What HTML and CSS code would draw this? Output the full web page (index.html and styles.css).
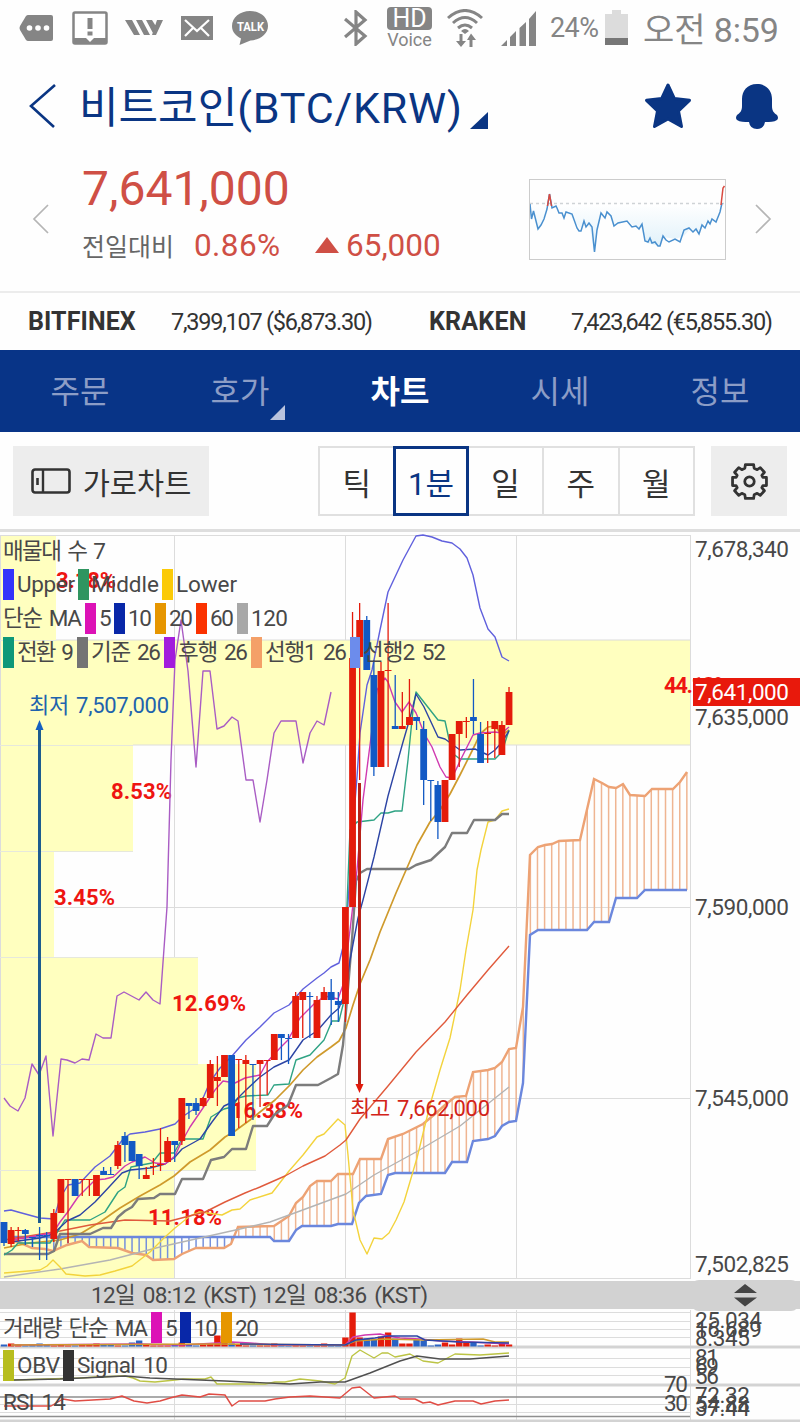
FILE: index.html
```html
<!DOCTYPE html>
<html lang="ko">
<head>
    <meta charset="utf-8"/>
    <title>비트코인(BTC/KRW)</title>
    <meta name="viewport" content="width=device-width, initial-scale=1"/>
    <link rel="stylesheet" href="styles.css">
</head>
<body>
    <div class="status">
        <svg class="st-msg" viewBox="0 0 35 28"><path d="M9 1H32Q34 1 34 3V25Q34 27 32 27H9Q8 27 7 26L1 16Q0 14 1 12L7 2Q8 1 9 1Z" fill="#858585"/><g fill="#fff"><circle cx="10.500" cy="14" r="2.800"/><circle cx="19" cy="14" r="2.800"/><circle cx="27.500" cy="14" r="2.800"/></g></svg>
        <svg class="st-alert" viewBox="0 0 36 34"><path d="M3 1.500H33Q34.500 1.500 34.500 3V31Q34.500 32.500 33 32.500H3Q1.500 32.500 1.500 31V3Q1.500 1.500 3 1.500Z" fill="#fff" stroke="#858585" stroke-width="2.500"/><path d="M2 27H34V33H2Z" fill="#858585"/><path d="M13.500 26.500L18 31L22.500 26.500Z" fill="#fff"/><path d="M15.500 7H20.500V18H15.500ZM15.500 20.500H20.500V24.500H15.500Z" fill="#858585"/></svg>
        <svg class="st-w" viewBox="0 0 38 16"><path d="M0 0H7L15 15H9ZM11 0H17L25 15H19ZM21 0H27L32 8L29 15ZM32 0H38L31 15H27Z" fill="#858585"/></svg>
        <svg class="st-mail" viewBox="0 0 32 24"><path d="M0 0H32V24H0Z" fill="#858585"/><path d="M4 4L16 15L28 4M4 20L12 12M28 20L20 12" fill="none" stroke="#fff" stroke-width="2.200"/></svg>
        <svg class="st-talk" viewBox="0 0 37 35"><path d="M18 0C28 0 36 6.500 36 15C36 23 28 29 18.500 29.500L7.500 34L9 27.500C4 25 0 21 0 15C0 6.500 8 0 18 0Z" fill="#858585"/><text x="5" y="20" textLength="27" lengthAdjust="spacingAndGlyphs">TALK</text></svg>
        <svg class="st-bt" viewBox="0 0 24 36"><path d="M1 9L21 26L12 34V2L21 10L1 27" fill="none" stroke="#858585" stroke-width="3.200"/></svg>
        <div class="hd"><b>HD</b><span>Voice</span></div>
        <svg class="st-wifi" viewBox="0 0 36 38"><g fill="none" stroke="#858585" stroke-width="3"><path d="M1 9Q18 -6 35 9M6 14Q18 3 30 14M11 19Q18 13 25 19"/></g><path d="M14 22Q18 18 22 22L18 25ZM12.500 25H15.500V32H19L14 38L9 32H12.500ZM22.500 38H25.500V31H29L24 24.500L20 31H22.500Z" fill="#858585"/></svg>
        <svg class="st-sig" viewBox="0 0 35 35"><path d="M0 35L6 29V35ZM9 26L15 20V35H9ZM18.500 17L25 11V35H18.500ZM28 8L35 0V35H28Z" fill="#858585"/></svg>
        <span class="pct">24%</span>
        <svg class="st-bat" viewBox="0 0 23 35"><path d="M7 0H16V4H23V35H0V4H7Z" fill="#dcdcdc"/><path d="M0 28H23V35H0Z" fill="#777"/></svg>
        <span class="clock">오전 8:59</span>
    </div>

    <header>
        <svg class="back" viewBox="0 0 28 46"><path d="M26 2L2 23L25 44" fill="none" stroke="#0a3583" stroke-width="2.600"/></svg>
        <h1>비트코인<span>(BTC/KRW)</span></h1>
        <svg class="corner" viewBox="0 0 18 17"><path d="M18 0V17H0Z" fill="#0a3583"/></svg>
        <svg class="star" viewBox="0 0 48 46"><path d="M24 2L30.300 15.500L45.500 17.300L34.500 28L37.500 43.500L24 36L10.500 43.500L13.500 28L2.500 17.300L17.700 15.500Z" fill="#0a3583" stroke="#0a3583" stroke-width="3" stroke-linejoin="round"/></svg>
        <svg class="bell" viewBox="0 0 42 45"><path d="M21 0C31 0 36 7 36 15V22C36 27 38 29 41 31Q43 34 41 36C38 38 34 38 29 38Q28 45 21 45Q14 45 13 38C8 38 4 38 1 36Q-1 34 1 31C4 29 6 27 6 22V15C6 7 11 0 21 0Z" fill="#0a3583"/></svg>
    </header>

    <section class="price">
        <svg class="arrow" viewBox="0 0 18 30"><path d="M16 1L2 15L16 29" fill="none" stroke="#b5b5b5" stroke-width="1.700"/></svg>
        <div class="now">
            <strong>7,641,000</strong>
            <div class="diff"><span class="label">전일대비</span><span class="rate">0.86%</span><i class="up"></i><span>65,000</span></div>
        </div>
        <svg class="spark" viewBox="529 179 197 81">
            <defs><linearGradient id="fade" x1="0" y1="0" x2="0" y2="1"><stop offset="0" stop-color="#fff"/><stop offset="1" stop-color="#dceff9"/></linearGradient></defs>
            <path fill="url(#fade)" d="M529 204L531 219L533 211L538 229L544 219L548 204L551 204L554 208L557 205L564 215L567 212L580 228L585 222L590 228L594 252L597 230L601 213L608 213L615 225L628 220L636 228L641 226L647 243L660 246L664 237L675 239L684 236L690 229L700 231L707 220L716 220L720 204Z"/>
            <path d="M530 203.500H724" stroke="#cfd3d6" stroke-width="1.500" stroke-dasharray="3 3"/>
            <path class="spark-line" d="M530 204L531.500 219L533.500 211L538 229L541 225L544 219L547 209L549.500 194L552 208L556 206L557 208L559 213L562 213L564 218L566 212L572 214L577 228L579 231L581 231L584 221L586 227L589 223L592 227L594.500 252L597 230L601 213L605 218L607 212L611 216L614 226L618 223L627 221L632 227L636 226L639 229L642 224L645 241L648 242L650 238L652 243L655 242L658 246L660 246L663 236L666 240L669 242L675 239L680 242L684 230L689 228L693 232L696 229L699 234L702 225L705 228L708 221L710 224L712 219L716 222L720 212L722 203"/>
            <path d="M547.500 206L549.500 194L551.500 206M721 205L723 188L724.500 186" fill="none" stroke="#d9493f" stroke-width="1.500"/>
            <rect x="529.500" y="179.500" width="196" height="80" fill="none" stroke="#ccc"/>
        </svg>
        <svg class="arrow next" viewBox="0 0 18 30"><path d="M2 1L16 15L2 29" fill="none" stroke="#b5b5b5" stroke-width="1.700"/></svg>
    </section>

    <section class="quotes">
        <b class="bfx">BITFINEX</b><span class="q1">7,399,107 ($6,873.30)</span>
        <b class="krk">KRAKEN</b><span class="q2">7,423,642 (€5,855.30)</span>
    </section>

    <nav>
        <a>주문</a>
        <a class="has-sub">호가</a>
        <a class="on">차트</a>
        <a>시세</a>
        <a>정보</a>
    </nav>

    <div class="tools">
        <button class="wide">
            <svg viewBox="0 0 40 26"><rect x="1.500" y="1.500" width="37" height="23" rx="2.500" fill="none" stroke="#333" stroke-width="2.600"/><path d="M12 1V25" stroke="#333" stroke-width="2.400"/><path d="M6.500 10V17" stroke="#333" stroke-width="2.600"/></svg>
            가로차트
        </button>
        <div class="period">
            <button>틱</button>
            <button class="on">1분</button>
            <button>일</button>
            <button>주</button>
            <button>월</button>
        </div>
        <button class="gear">
            <svg viewBox="-18 -18 36 36"><g fill="none" stroke="#333" stroke-width="2.700" stroke-linejoin="round"><path d="M-4 -16.500H4L4.500 -13L7.500 -11.500L10.500 -13.500L14.500 -9L12 -6L13 -4H16.500V4H13L12 6L14.500 9L10.500 13.500L7.500 11.500L4.500 13L4 16.500H-4L-4.500 13L-7.500 11.500L-10.500 13.500L-14.500 9L-12 6L-13 4H-16.500V-4H-13L-12 -6L-14.500 -9L-10.500 -13.500L-7.500 -11.500L-4.500 -13Z"/><circle r="4.600"/></g></svg>
        </button>
    </div>

    <svg class="chart" viewBox="0 529 800 893">
        <rect y="529" width="800" height="3" fill="#dedede"/>
        <g class="profile">
            <rect x="0" y="535" width="56" height="105"/>
            <rect x="0" y="640" width="690" height="105"/>
            <rect x="0" y="745" width="133" height="106"/>
            <rect x="0" y="851" width="54" height="107"/>
            <rect x="0" y="958" width="198" height="106"/>
            <rect x="0" y="1064" width="256" height="106"/>
            <rect x="0" y="1170" width="174" height="108"/>
        </g>
        <path class="grid" d="M0 535.500H691M56 640H690M133 745H690M54 907.500H690M256 1098.500H690M0 1278.500H691M.5 535V1278M174.500 535V640M174.500 745V958M174.500 1170V1278M345.500 535V640M345.500 745V1278M516.500 535V640M516.500 745V1278M690.500 535V1278"/>
        <path class="grid rows" d="M0 640.500H56M0 745.500H133M0 851.500H133M0 957.500H198M0 1064.500H198M0 1170.500H256"/>

        <g class="pct-labels">
            <text x="56" y="588" textLength="60">3.18%</text>
            <text x="664" y="693" textLength="66">44.13%</text>
            <text x="111" y="799" textLength="61">8.53%</text>
            <text x="54" y="905" textLength="61">3.45%</text>
            <text x="172" y="1011" textLength="74">12.69%</text>
            <text x="231" y="1118" textLength="72">16.38%</text>
            <text x="148" y="1225" textLength="74">11.18%</text>
        </g>

        <g id="cloud"></g>
        <g class="lines">
            <polyline class="ma120" points="4,1277 60,1269 110,1260 160,1247 200,1238 240,1229 270,1222 300,1211 346,1194 374,1175 416,1152 460,1126 509,1087"/>
            <polyline class="lower" points="4,1273 40,1270 47,1266 53,1260 60,1267 66,1274 85,1276 100,1275 115,1271 132,1266 150,1252 165,1237 175,1228 190,1216 200,1212 222,1215 232,1210 240,1209 250,1200 272,1193 289,1171 303,1155 317,1137 324,1134 338,1119 345,1125 348,1155 353,1210 360,1240 367,1254 374,1238 382,1239 389,1233 396,1220 404,1202 417,1158 430,1105 440,1070 450,1038 460,990 466,950 473,910 477,870 481,850 488,822 495,820 502,811 509,809"/>
            <polyline class="upper" points="4,1211 11,1210 18,1212 40,1218 54,1219 60,1198 68,1185 80,1183 95,1167 110,1156 124,1138 130,1134 145,1132 160,1129 175,1124 182,1117 200,1105 210,1082 220,1068 232,1056 246,1040 260,1027 274,1013 289,1005 303,989 317,978 324,973 331,967 339,963 346,935 352,840 357,777 360,733 367,685 372,670 380,630 388,592 403,560 416,536 423,535 432,537 442,541 452,543 460,549 467,558 473,575 480,608 488,629 495,637 502,657 509,661"/>
            <polyline class="ma20" points="4,1248 30,1243 60,1240 80,1234 100,1222 120,1208 140,1196 160,1185 174,1176 190,1162 210,1150 225,1137 235,1131 250,1120 260,1112 275,1100 290,1085 303,1070 317,1057 331,1047 339,1041 346,1028 353,1005 360,984 370,960 380,932 396,893 403,877 417,845 430,822 440,810 450,794 460,775 475,745 480,734 488,727 495,726 502,735 509,730"/>
            <polyline class="ma60" points="4,1240 60,1231 90,1225 125,1220 170,1221 205,1212 225,1202 245,1193 260,1187 285,1176 303,1166 325,1156 340,1145 346,1140 360,1119 388,1086 416,1052 445,1022 467,995 488,970 509,946"/>
            <polyline class="kijun" points="4,1254 48,1254 54,1251 60,1234 90,1234 103,1228 111,1228 118,1217 125,1211 132,1207 138,1199 154,1198 160,1194 175,1194 182,1179 203,1179 211,1160 224,1157 232,1149 246,1149 253,1126 267,1126 274,1115 288,1105 296,1085 318,1085 331,1078 338,1074 343,1045 347,1000 352,940 356,881 360,873 367,869 409,869 416,865 431,860 445,847 452,833 467,833 474,820 495,820 502,814 509,814"/>
            <polyline class="tenkan" points="4,1255 12,1250 18,1243 50,1243 60,1228 65,1220 90,1220 105,1212 118,1192 125,1187 131,1167 152,1163 160,1153 174,1153 182,1139 203,1139 211,1117 224,1109 232,1107 238,1098 246,1096 268,1095 274,1085 289,1084 296,1060 310,1055 324,1040 332,1021 339,1021 343,1005 350,830 357,822 374,820 381,813 388,813 395,811 402,811 408,760 413,710 416,692 438,720 445,721 452,753 460,759 495,759 502,752 509,730"/>
            <polyline class="chikou" points="4,1098 10,1106 18,1111 25,1098 32,1064 39,1075 46,1056 53,1136 61,1059 67,1060 75,1063 82,1059 89,1060 96,1034 103,1038 111,1038 117,996 124,992 139,1000 146,992 153,1000 160,1004 167,907 171,760 175,660 181,620 188,671 196,767 203,671 210,671 217,729 224,726 232,717 238,721 246,780 253,780 260,822 267,780 274,733 281,721 296,721 303,763 310,733 317,721 324,725 331,692"/>
            <polyline class="ma10" points="11,1242 40,1238 53,1234 67,1221 80,1215 95,1202 110,1186 122,1173 130,1170 150,1168 165,1164 175,1157 182,1149 200,1139 212,1122 224,1106 235,1101 246,1090 260,1077 274,1067 289,1060 303,1040 317,1031 331,1015 339,1008 346,990 350,960 358,918 363,900 374,857 388,796 403,742 410,718 416,694 424,707 438,737 445,739 460,750 475,749 488,755 495,750 502,742 509,731"/>
            <polyline class="ma5" points="11,1240 25,1238 40,1235 53,1233 60,1222 67,1213 78,1197 95,1180 105,1179 113,1177 125,1166 132,1162 145,1157 155,1163 165,1164 175,1156 180,1145 190,1127 205,1105 215,1090 223,1081 235,1083 245,1078 260,1075 267,1062 280,1048 288,1040 300,1018 315,1003 325,996 338,999 343,985 350,930 357,870 363,800 370,745 377,690 385,678 388,682 395,702 402,712 409,702 416,713 425,735 432,747 440,767 446,777 452,778 462,757 473,735 480,733 495,732 502,733 509,727"/>
        </g>
        <g id="candles"></g>

        <path d="M39.500 728V1223" stroke="#1d5c8f" stroke-width="3"/>
        <path d="M39.500 720L43.500 730H35.500Z" fill="#1560c0"/>
        <path d="M359.500 783V1086" stroke="#b82218" stroke-width="3"/>
        <path d="M359.500 1093L363.500 1084H355.500Z" fill="#e21b0c"/>
        <text x="29" y="713" textLength="140" class="low">최저 7,507,000</text>
        <text x="350" y="1116" textLength="140" class="high">최고 7,662,000</text>

        <g class="legend">
            <rect x="3" y="569" width="11" height="31" fill="#3333fb"/>
            <rect x="78" y="569" width="11" height="31" fill="#2f9560"/>
            <rect x="162" y="569" width="11" height="31" fill="#fbca07"/>
            <rect x="85" y="603" width="11" height="31" fill="#dc12b6"/>
            <rect x="114" y="603" width="11" height="31" fill="#0827a8"/>
            <rect x="155" y="603" width="11" height="31" fill="#e69600"/>
            <rect x="196" y="603" width="11" height="31" fill="#fb3200"/>
            <rect x="237" y="603" width="11" height="31" fill="#a8a8a8"/>
            <rect x="3" y="637" width="11" height="31" fill="#0e9879"/>
            <rect x="77" y="637" width="11" height="31" fill="#747474"/>
            <rect x="164" y="637" width="11" height="31" fill="#a21cdc"/>
            <rect x="251" y="637" width="11" height="31" fill="#f4a068"/>
            <rect x="350" y="637" width="10" height="31" fill="#6c8cec"/>
            <text x="3" y="559" textLength="103">매물대 수 7</text>
            <text x="17" y="592" textLength="58">Upper</text>
            <text x="91" y="592" textLength="68">Middle</text>
            <text x="176" y="592" textLength="61">Lower</text>
            <text x="3" y="626" textLength="79">단순 MA</text>
            <text x="99" y="626">5</text>
            <text x="128" y="626" textLength="24">10</text>
            <text x="169" y="626" textLength="24">20</text>
            <text x="210" y="626" textLength="24">60</text>
            <text x="251" y="626" textLength="37">120</text>
            <text x="17" y="660" textLength="57">전환 9</text>
            <text x="91" y="660" textLength="70">기준 26</text>
            <text x="178" y="660" textLength="70">후행 26</text>
            <text x="265" y="660" textLength="82">선행1 26</text>
            <text x="363" y="660" textLength="83">선행2 52</text>
        </g>

        <g class="axis">
            <text x="695" y="557" textLength="94">7,678,340</text>
            <text x="695" y="725" textLength="94">7,635,000</text>
            <text x="695" y="915" textLength="94">7,590,000</text>
            <text x="695" y="1106" textLength="94">7,545,000</text>
            <text x="695" y="1272" textLength="94">7,502,825</text>
            <rect x="693" y="678" width="107" height="28" fill="#e8190c"/>
            <text class="cur" x="695" y="700" textLength="94">7,641,000</text>
        </g>

        <rect y="1281" width="800" height="28" fill="#d2d2d2"/>
        <rect x="691" y="1280" width="108" height="31" rx="8" fill="#d2d2d2"/>
        <path d="M745 1284L757 1293H734ZM734 1297.500H757L745 1306.500Z" fill="#444"/>
        <g class="legend">
            <text x="91" y="1303" textLength="166">12일 08:12 (KST)</text>
            <text x="262" y="1303" textLength="166">12일 08:36 (KST)</text>
        </g>

        <path class="grid" d="M0 1312.500H691M0 1321.500H690M0 1329.500H690M0 1337.500H690M0 1358.500H690M0 1367.500H690M0 1375.500H690M0 1404.500H690M0 1412.500H690M174.500 1310V1420M345.500 1310V1420M516.500 1310V1420M690.500 1310V1420"/>
        <path d="M0 1347H800M0 1385H800M0 1421H800" stroke="#d3d3d3" stroke-width="3"/>
        <path d="M0 1397H690M0 1416.500H690" stroke="#8f8f8f" stroke-width="1.600"/>
        <g id="volume"></g>
        <g class="lines">
            <polyline class="ma5" points="11,1345 140,1344 182,1345 217,1343 232,1342 250,1343 275,1345 345,1345 353,1337 365,1335 380,1334 388,1336 400,1338 420,1339 440,1341 470,1342 509,1344"/>
            <polyline class="ma20" points="11,1345 217,1344 345,1345 356,1341 385,1339 423,1340 483,1339 495,1342 509,1342"/>
            <polyline class="ma10" points="240,1344 345,1345 356,1340 375,1338 388,1336 417,1336 425,1340 460,1342 509,1343"/>
            <polyline class="obv" points="14,1380 80,1378 96,1377 125,1376 133,1378 140,1381 155,1382 175,1380 183,1379 205,1379 211,1377 217,1384 232,1384 265,1384 275,1382 285,1382 300,1379 320,1381 335,1384 345,1378 352,1356 360,1350 374,1358 382,1353 388,1353 395,1357 410,1354 423,1361 438,1363 455,1354 480,1355 509,1353"/>
            <polyline class="signal" points="14,1380 60,1379 125,1376 150,1378 225,1381 290,1384 320,1382 345,1382 370,1373 400,1361 417,1356 440,1359 470,1359 509,1356"/>
            <polyline class="rsi" points="4,1406 51,1406 63,1399 75,1401 110,1399 122,1396 134,1401 147,1403 160,1401 170,1398 182,1395 200,1397 209,1394 225,1395 232,1406 239,1401 265,1401 275,1399 290,1397 310,1396 340,1398 352,1388 360,1387 374,1398 395,1396 400,1399 415,1399 423,1403 430,1402 438,1405 455,1401 473,1401 481,1404 495,1401 509,1400"/>
        </g>
        <g class="legend">
            <rect x="151" y="1312" width="11" height="31" fill="#dc12b6"/>
            <rect x="180" y="1312" width="11" height="31" fill="#0827a8"/>
            <rect x="221" y="1312" width="11" height="31" fill="#e69600"/>
            <rect x="3" y="1350" width="11" height="31" fill="#b7bd1e"/>
            <rect x="63" y="1350" width="11" height="31" fill="#333"/>
            <text x="3" y="1336" textLength="145">거래량 단순 MA</text>
            <text x="165" y="1336">5</text>
            <text x="194" y="1336" textLength="24">10</text>
            <text x="235" y="1336" textLength="24">20</text>
            <text x="17" y="1373" textLength="43">OBV</text>
            <text x="77" y="1373" textLength="91">Signal 10</text>
            <text x="3" y="1410" textLength="63">RSI 14</text>
            <text x="664" y="1392" textLength="24">70</text>
            <text x="664" y="1411" textLength="24">30</text>
            <text x="695" y="1328" textLength="67">25.034</text>
            <text x="695" y="1337" textLength="67">16.689</text>
            <text x="695" y="1346" textLength="55">8.345</text>
            <text x="695" y="1365" textLength="24">81</text>
            <text x="695" y="1374" textLength="24">69</text>
            <text x="695" y="1384" textLength="24">56</text>
            <text x="695" y="1403" textLength="55">72.32</text>
            <text x="695" y="1412" textLength="55">54.88</text>
            <text x="695" y="1416" textLength="55">37.44</text>
        </g>
    </svg>
    <script src="chart.js"></script>
</body>
</html>
```

FILE: styles.css
```css
html, body {
    margin: 0;
    background-color: #fefefe;
}
body {
    width: 800px;
    height: 1422px;
    overflow: hidden;
    font-family: Roboto, "Noto Sans CJK KR", sans-serif;
    color: #333;
}
svg {
    display: block;
    flex: none;
}
button {
    font: inherit;
    color: inherit;
    border: none;
    padding: 0;
}

.status {
    display: flex;
    align-items: center;
    height: 56px;
    color: #858585;
    white-space: nowrap;
}
.st-msg { width: 35px; height: 28px; margin-left: 19px; }
.st-alert { width: 36px; height: 34px; margin-left: 18px; }
.st-w { width: 38px; height: 16px; margin-left: 17px; }
.st-mail { width: 32px; height: 24px; margin-left: 18px; }
.st-talk { width: 37px; height: 35px; margin-left: 19px; }
.st-talk text { font-size: 13px; font-weight: bold; fill: #fff; }
.st-bt { width: 24px; height: 36px; margin-left: 75px; }
.hd {
    display: flex;
    flex-direction: column;
    align-items: center;
    width: 45px;
    margin-left: 19px;
}
.hd b {
    width: 45px;
    height: 23px;
    border-radius: 4px;
    background-color: #858585;
    color: #fff;
    font-size: 25px;
    font-weight: normal;
    line-height: 24px;
    text-align: center;
}
.hd span {
    font-size: 18px;
    line-height: 19px;
}
.st-wifi { width: 36px; height: 38px; margin-left: 15px; }
.st-sig { width: 35px; height: 35px; margin-left: 18px; }
.pct {
    width: 54px;
    margin-left: 14px;
    font-size: 27px;
    letter-spacing: -.6px;
}
.st-bat { width: 23px; height: 35px; margin: -2px 0 0 1px; }
.clock {
    margin: -2px 0 0 15px;
    font-size: 34px;
    letter-spacing: -.1px;
}

header {
    display: flex;
    align-items: center;
    height: 100px;
    color: #0a3583;
}
.back { width: 28px; height: 46px; margin-left: 29px; }
h1 {
    width: 387px;
    margin: 3px 0 0 22px;
    font-size: 43px;
    font-weight: normal;
    line-height: 60px;
    white-space: nowrap;
}
h1 span {
    letter-spacing: .8px;
}
.corner { width: 18px; height: 17px; margin: 28px 0 0 4px; }
.star { width: 48px; height: 46px; margin-left: 156px; }
.bell { width: 42px; height: 45px; margin-left: 44px; }

.price {
    display: flex;
    height: 135px;
    border-bottom: 2px solid #ececec;
}
.arrow { width: 18px; height: 30px; margin: 48px 0 0 32px; }
.now {
    width: 447px;
    margin-left: 32px;
    color: #cf4f45;
}
.now strong {
    display: block;
    margin-top: 5px;
    font-size: 48px;
    font-weight: normal;
    line-height: 56px;
}
.diff {
    display: flex;
    align-items: center;
    height: 56px;
    font-size: 31.5px;
}
.label {
    width: 112px;
    font-size: 25px;
    color: #666;
}
.rate {
    width: 121px;
    letter-spacing: .4px;
}
.up {
    width: 0;
    border: 12px solid transparent;
    border-top: none;
    border-bottom: 16px solid #cf4f45;
    margin-right: 7px;
}
.spark { width: 197px; height: 81px; margin-top: 23px; }
.spark-line {
    fill: none;
    stroke: #4a90cf;
    stroke-width: 1.5;
}
.arrow.next { margin-left: 28px; }

.quotes {
    display: flex;
    align-items: center;
    height: 57px;
    font-size: 23.5px;
    white-space: nowrap;
}
.quotes b { font-size: 25px; }
.bfx { width: 143px; margin-left: 28px; letter-spacing: .1px; }
.q1 { width: 258px; letter-spacing: -1.25px; }
.krk { width: 142px; letter-spacing: .2px; }
.q2 { letter-spacing: -1.25px; }

nav {
    display: flex;
    height: 82px;
    background-color: #083487;
}
nav a {
    position: relative;
    flex: 1;
    font-size: 32px;
    line-height: 84px;
    text-align: center;
    color: #8c9dc6;
}
nav a.on {
    font-weight: bold;
    color: #fff;
}
.has-sub::after {
    content: "";
    position: absolute;
    right: 35px;
    bottom: 12px;
    border-left: 15px solid transparent;
    border-bottom: 15px solid #b9c3de;
}

.tools {
    display: flex;
    height: 70px;
    padding: 14px 13px 13px 13px;
    font-size: 31px;
}
.wide {
    display: flex;
    align-items: center;
    justify-content: center;
    gap: 12px;
    width: 196px;
    font-size: 29.5px;
    background-color: #ededed;
}
.wide svg { width: 40px; height: 26px; }
.period {
    display: flex;
    width: 377px;
    margin-left: 109px;
}
.period button {
    flex: none;
    width: 75.4px;
    box-sizing: border-box;
    background: none;
    border: 2px solid #e0e0e0;
    border-left: none;
}
.period button:first-child {
    border-left: 2px solid #e0e0e0;
    border-right: none;
}
.period .on {
    border: 3px solid #0a3583;
    color: #0a3583;
}
.gear {
    display: flex;
    align-items: center;
    justify-content: center;
    width: 76px;
    margin-left: 16px;
    background-color: #ededed;
}
.gear svg { width: 37px; height: 37px; }

.chart {
    width: 800px;
    height: 893px;
}
.profile { fill: #ffffbf; }
.grid { fill: none; stroke: #dcdcdc; }
.rows { stroke: #e6e8dc; }
.pct-labels {
    font-size: 22px;
    font-weight: bold;
    fill: #ee1511;
}
.legend, .axis {
    font-size: 22.5px;
    word-spacing: 3px;
    fill: #484848;
}
.axis .cur { fill: #fff; }
.low, .high { font-size: 22px; word-spacing: 2px; }
.low { fill: #1e63ad; }
.high { fill: #d32318; }
.lines polyline {
    fill: none;
    stroke-width: 1.4;
    stroke-linejoin: round;
}
.lines .upper { stroke: #6060dd; }
.lines .lower { stroke: #f3d33c; }
.lines .ma5 { stroke: #d03ab0; }
.lines .ma10 { stroke: #2c44a4; }
.lines .ma20 { stroke: #cf9a2c; stroke-width: 1.7; }
.lines .ma60 { stroke: #e05a3c; }
.lines .ma120 { stroke: #b4b4b4; }
.lines .tenkan { stroke: #2fa384; }
.lines .kijun { stroke: #7c7c7c; stroke-width: 2.4; }
.lines .chikou { stroke: #a95cc4; }
.lines .obv { stroke: #bcc444; }
.lines .signal { stroke: #505050; }
.lines .rsi { stroke: #e04c44; }
```

FILE: chart.js
```js
const NS = "http://www.w3.org/2000/svg";
const X0 = 4;
const STEP = 7.113;
const RED = "#e41b0b";
const BLUE = "#1259c4";

// [up, high, body top, body bottom, low]
const candles = [
    [0,1222,1222,1243,1246], [1,1227,1230,1244,1247], [1,1227,1230,1231,1241], [0,1229,1230,1234,1245],
    [0,1237,1237,1238,1247], [0,1227,1235,1236,1260], [0,1232,1235,1236,1260], [1,1209,1213,1239,1242],
    [1,1179,1179,1213,1213], [1,1179,1179,1180,1243], [0,1179,1179,1196,1196], [1,1179,1179,1180,1196],
    [1,1179,1179,1180,1196], [1,1175,1175,1196,1196], [0,1167,1171,1175,1175], [0,1167,1174,1175,1175],
    [1,1141,1145,1166,1169], [0,1132,1136,1145,1162], [0,1141,1141,1161,1161], [0,1154,1154,1166,1179],
    [1,1167,1175,1179,1179], [1,1158,1166,1167,1175], [1,1128,1164,1165,1171], [1,1137,1141,1162,1162],
    [0,1141,1141,1145,1162], [1,1098,1098,1141,1145], [0,1103,1103,1106,1119], [0,1098,1103,1111,1115],
    [1,1097,1098,1106,1107], [1,1060,1064,1098,1098], [1,1056,1077,1081,1106], [1,1055,1055,1077,1077],
    [0,1055,1055,1136,1136], [1,1059,1059,1060,1128], [1,1055,1060,1064,1123], [0,1064,1064,1065,1120],
    [1,1060,1060,1064,1107], [1,1060,1060,1061,1095], [1,1034,1034,1060,1060], [0,1034,1034,1038,1060],
    [0,1034,1038,1039,1064], [1,992,996,1038,1038], [1,992,992,1000,1038], [0,992,996,997,1038],
    [1,996,1000,1038,1038], [1,987,992,1000,1000], [0,979,992,1000,1025], [0,992,1001,1005,1022],
    [1,907,907,1004,1022], [1,612,658,907,907], [1,603,620,657,780], [0,616,620,670,670],
    [0,660,675,767,776], [1,662,671,767,767], [1,603,670,671,767], [0,675,726,729,729],
    [1,692,726,729,729], [1,679,717,725,725], [0,717,717,721,730], [0,721,729,780,805],
    [0,780,780,781,821], [0,781,785,822,839], [1,780,780,822,822], [1,734,734,780,780],
    [1,721,721,734,767], [1,717,721,722,738], [0,679,717,721,734], [0,722,734,763,763],
    [1,721,733,734,763], [1,721,721,729,758], [1,721,725,755,755], [1,687,692,725,725]
];

const volume = [
    2,3,2,1,2,3,2,1,2,1,1,2,2,3,2,2,1,1,4,6,2,1,1,1,2,4,2,1,2,3,11,4,3,2,1,1,
    1,1,3,2,1,2,1,2,1,3,2,1,9,34,9,8,7,10,14,8,3,3,7,6,1,2,4,2,8,4,4,1,2,1,3,2
];

const spanA = [[11,1240],[18,1242],[32,1248],[45,1249],[53,1251],[67,1245],[82,1241],[89,1247],[118,1248],[132,1253],[146,1255],[153,1260],[174,1259],[182,1254],[196,1248],[224,1248],[231,1244],[238,1227],[274,1226],[289,1216],[296,1203],[303,1197],[310,1186],[317,1181],[331,1181],[338,1174],[353,1174],[360,1159],[381,1159],[388,1139],[403,1134],[423,1124],[435,1114],[445,1105],[455,1097],[466,1096],[473,1072],[488,1070],[495,1068],[502,1062],[509,1049],[516,1048],[523,1007],[530,855],[538,847],[545,845],[552,844],[559,841],[580,840],[594,779],[602,783],[609,787],[616,788],[623,784],[630,795],[645,796],[652,789],[673,789],[680,782],[687,772]];
const spanB = [[11,1237],[270,1237],[274,1241],[289,1241],[296,1230],[302,1226],[331,1226],[338,1224],[352,1224],[359,1203],[366,1196],[381,1194],[388,1175],[395,1173],[445,1173],[452,1162],[467,1162],[473,1141],[488,1139],[495,1136],[502,1126],[509,1122],[516,1121],[523,1083],[530,935],[538,930],[587,930],[594,922],[609,922],[616,898],[637,898],[645,890],[687,890]];

function add(parent, tag, attrs) {
    const el = document.createElementNS(NS, tag);
    for(const k in attrs) el.setAttribute(k, attrs[k]);
    parent.appendChild(el);
}

function at(line, x) {
    for(let i = 1; i < line.length; i++) {
        const [x1, y1] = line[i - 1];
        const [x2, y2] = line[i];
        if(x <= x2) return y1 + (y2 - y1) * (x - x1) / (x2 - x1);
    }
    return line[line.length - 1][1];
}

const cloud = document.getElementById("cloud");
for(let i = 2; i <= 96; i++) {
    const x = X0 + STEP * i;
    const a = at(spanA, x);
    const b = at(spanB, x);
    add(cloud, "line", {x1: x, x2: x, y1: a, y2: b, stroke: a < b ? "#efb592" : "#7590dc", "stroke-width": 1.5});
}
add(cloud, "polyline", {points: spanA.join(" "), fill: "none", stroke: "#eda274", "stroke-width": 2.4});
add(cloud, "polyline", {points: spanB.join(" "), fill: "none", stroke: "#6b87dd", "stroke-width": 2.4});

const box = document.getElementById("candles");
candles.forEach(([up, high, top, bottom, low], i) => {
    const x = X0 + STEP * i;
    const color = up ? RED : BLUE;
    add(box, "line", {x1: x, x2: x, y1: high, y2: low, stroke: color, "stroke-width": 1.3});
    add(box, "rect", {x: x - 3.4, y: top, width: 6.8, height: bottom - top, fill: color});
});

const bars = document.getElementById("volume");
volume.forEach((h, i) => {
    add(bars, "rect", {x: X0 + STEP * i - 3.2, y: 1346.5 - h, width: 6.4, height: h, fill: candles[i][0] ? RED : "#2a62c4"});
});
```
